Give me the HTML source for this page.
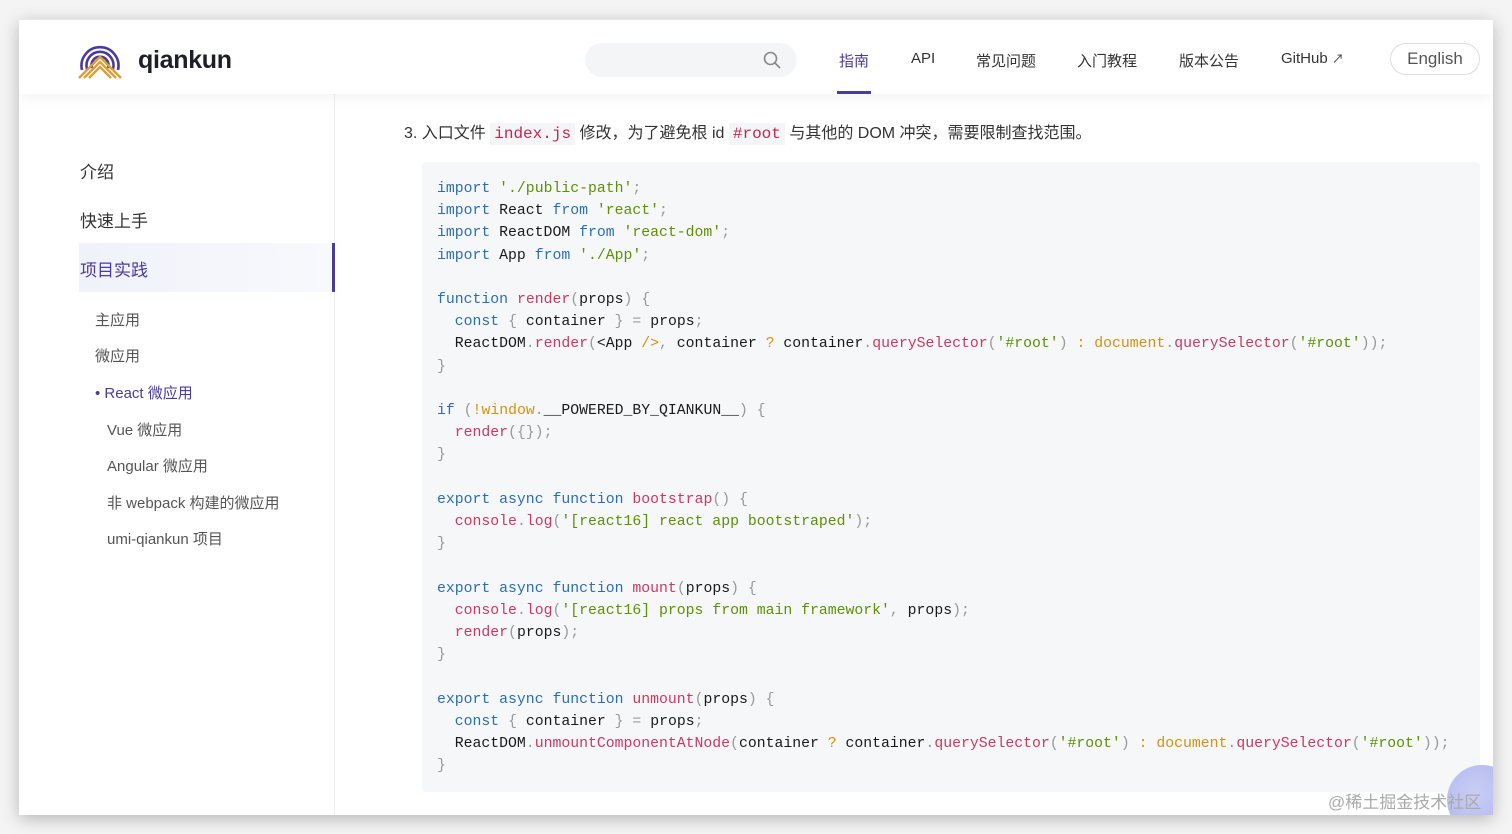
<!DOCTYPE html>
<html><head><meta charset="utf-8">
<style>
html,body{margin:0;padding:0;width:1512px;height:834px;overflow:hidden;background:#f4f4f4;font-family:"Liberation Sans","Noto Sans CJK SC",sans-serif;}
.win{position:absolute;left:19px;top:19px;width:1474px;height:796px;background:#fff;overflow:hidden;box-shadow:0 4px 16px rgba(0,0,0,.25);}
.hdr{position:absolute;left:0;top:0;width:100%;height:74px;background:#fff;box-shadow:0 6px 12px rgba(0,0,0,.04);z-index:2;border-top:1px solid #e8e8e8}
.logo{position:absolute;left:59px;top:20px}
.brand{position:absolute;left:119px;top:26px;font-size:25px;font-weight:bold;color:#1e1e28;letter-spacing:-0.3px}
.search{position:absolute;left:566px;top:23px;width:212px;height:34px;border-radius:17px;background:#f4f5f7}
.nav{position:absolute;top:30px;font-size:15px;color:#333}
.eng{position:absolute;left:1371px;top:23px;width:88px;height:30px;border:1px solid #ddd;border-radius:16px;font-size:17px;color:#555;text-align:center;line-height:30px}
.side{position:absolute;left:0;top:74px;width:315px;height:722px;border-right:1px solid #eee;background:#fff}
.si{position:absolute;font-size:17px;color:#333}
.ss{position:absolute;font-size:15px;color:#555}
.code{position:absolute;left:403px;top:143px;width:1058px;height:630px;background:#f6f7f9;border-radius:4px}
pre{margin:0;position:absolute;left:15px;top:16px;font-family:"Liberation Mono",monospace;font-size:14.8px;line-height:22.2px;color:#1a1a1a}
.k{color:#2a6eb5}.s{color:#5f8f06}.f{color:#d0365e}.p{color:#999}.o{color:#d9900d}
.ic{font-family:"Liberation Mono",monospace;color:#c7254e;background:#f4f5f7;padding:2px 4px;font-size:16px}
</style></head><body>
<div class="win">
<div class="hdr">
<svg class="logo" width="44" height="40" viewBox="0 0 44 40">
<g fill="none" stroke="#4b3b9c" stroke-width="2.6"><path d="M4 30 A18.5 18.5 0 1 1 40 30"/><path d="M9 29 A13.5 13.5 0 1 1 35 29"/><path d="M14 28 A8.5 8.5 0 1 1 30 28"/></g>
<g fill="none" stroke="#d9a03c" stroke-width="2.4"><path d="M1 38 L22 17 L43 38"/><path d="M6 38 L22 22 L38 38"/><path d="M11 38 L22 27 L33 38"/></g>
</svg>
<div class="brand">qiankun</div>
<div class="search"><svg style="position:absolute;left:178px;top:8px" width="18" height="18" viewBox="0 0 18 18"><circle cx="7.5" cy="7.5" r="6" fill="none" stroke="#888" stroke-width="1.6"/><path d="M12 12 L17 17" stroke="#888" stroke-width="1.6"/></svg></div>
<div class="nav" style="left:820px;color:#4b3b9c">指南</div>
<div style="position:absolute;left:818px;top:71px;width:34px;height:3px;background:#4b3b9c"></div>
<div class="nav" style="left:892px">API</div>
<div class="nav" style="left:957px">常见问题</div>
<div class="nav" style="left:1058px">入门教程</div>
<div class="nav" style="left:1160px">版本公告</div>
<div class="nav" style="left:1262px">GitHub <span style="font-size:12px">↗</span></div>
<div class="eng">English</div>
</div>
<div class="side">
<div class="si" style="left:61px;top:65px">介绍</div>
<div class="si" style="left:61px;top:114px">快速上手</div>
<div style="position:absolute;left:60px;top:150px;width:256px;height:49px;background:linear-gradient(90deg,#f0f2fa,#f8f9fd)"></div>
<div style="position:absolute;left:313px;top:150px;width:3px;height:49px;background:#4b3b9c"></div>
<div class="si" style="left:61px;top:163px;color:#4b3b9c">项目实践</div>
<div class="ss" style="left:76px;top:216px">主应用</div>
<div class="ss" style="left:76px;top:252px">微应用</div>
<div class="ss" style="left:76px;top:289px;color:#4b3b9c">• React 微应用</div>
<div class="ss" style="left:88px;top:326px">Vue 微应用</div>
<div class="ss" style="left:88px;top:362px">Angular 微应用</div>
<div class="ss" style="left:88px;top:399px">非 webpack 构建的微应用</div>
<div class="ss" style="left:88px;top:435px">umi-qiankun 项目</div>
</div>
<div style="position:absolute;left:385px;top:100px;font-size:16px;color:#333">3. 入口文件 <span class="ic">index.js</span> 修改，为了避免根 id <span class="ic">#root</span> 与其他的 DOM 冲突，需要限制查找范围。</div>
<div class="code"><pre><span class="k">import</span> <span class="s">'./public-path'</span><span class="p">;</span>
<span class="k">import</span> React <span class="k">from</span> <span class="s">'react'</span><span class="p">;</span>
<span class="k">import</span> ReactDOM <span class="k">from</span> <span class="s">'react-dom'</span><span class="p">;</span>
<span class="k">import</span> App <span class="k">from</span> <span class="s">'./App'</span><span class="p">;</span>

<span class="k">function</span> <span class="f">render</span><span class="p">(</span>props<span class="p">)</span> <span class="p">{</span>
  <span class="k">const</span> <span class="p">{</span> container <span class="p">}</span> <span class="p">=</span> props<span class="p">;</span>
  ReactDOM<span class="p">.</span><span class="f">render</span><span class="p">(</span>&lt;App <span class="o">/&gt;</span><span class="p">,</span> container <span class="o">?</span> container<span class="p">.</span><span class="f">querySelector</span><span class="p">(</span><span class="s">'#root'</span><span class="p">)</span> <span class="o">:</span> <span class="o">document</span><span class="p">.</span><span class="f">querySelector</span><span class="p">(</span><span class="s">'#root'</span><span class="p">));</span>
<span class="p">}</span>

<span class="k">if</span> <span class="p">(</span><span class="o">!</span><span class="o">window</span><span class="p">.</span>__POWERED_BY_QIANKUN__<span class="p">)</span> <span class="p">{</span>
  <span class="f">render</span><span class="p">({});</span>
<span class="p">}</span>

<span class="k">export</span> <span class="k">async</span> <span class="k">function</span> <span class="f">bootstrap</span><span class="p">()</span> <span class="p">{</span>
  <span class="f">console</span><span class="p">.</span><span class="f">log</span><span class="p">(</span><span class="s">'[react16] react app bootstraped'</span><span class="p">);</span>
<span class="p">}</span>

<span class="k">export</span> <span class="k">async</span> <span class="k">function</span> <span class="f">mount</span><span class="p">(</span>props<span class="p">)</span> <span class="p">{</span>
  <span class="f">console</span><span class="p">.</span><span class="f">log</span><span class="p">(</span><span class="s">'[react16] props from main framework'</span><span class="p">,</span> props<span class="p">);</span>
  <span class="f">render</span><span class="p">(</span>props<span class="p">);</span>
<span class="p">}</span>

<span class="k">export</span> <span class="k">async</span> <span class="k">function</span> <span class="f">unmount</span><span class="p">(</span>props<span class="p">)</span> <span class="p">{</span>
  <span class="k">const</span> <span class="p">{</span> container <span class="p">}</span> <span class="p">=</span> props<span class="p">;</span>
  ReactDOM<span class="p">.</span><span class="f">unmountComponentAtNode</span><span class="p">(</span>container <span class="o">?</span> container<span class="p">.</span><span class="f">querySelector</span><span class="p">(</span><span class="s">'#root'</span><span class="p">)</span> <span class="o">:</span> <span class="o">document</span><span class="p">.</span><span class="f">querySelector</span><span class="p">(</span><span class="s">'#root'</span><span class="p">));</span>
<span class="p">}</span></pre></div>
<div style="position:absolute;left:1428px;top:746px;width:70px;height:70px;border-radius:50%;background:radial-gradient(circle at 40% 40%,#c9cdf5,#aab0ec)"></div>
<div style="position:absolute;left:1309px;top:769px;font-size:17px;color:#aaa">@稀土掘金技术社区</div>
</div>
</body></html>
